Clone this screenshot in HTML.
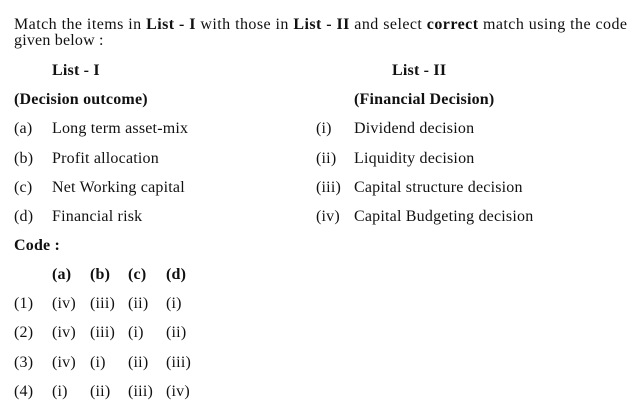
<!DOCTYPE html>
<html><head><meta charset="utf-8"><style>
body{margin:0;width:643px;height:414px;background:#fff;font-family:"Liberation Serif",serif;font-size:16px;letter-spacing:0.2px;color:#111;position:relative;overflow:hidden}
div{position:absolute;line-height:18px;white-space:nowrap}
b{font-weight:bold}
</style></head><body>
<div style="left:14px;top:16px;letter-spacing:0.45px">Match the items in <b>List - I</b> with those in <b>List - II</b> and select <b>correct</b> match using the code</div>
<div style="left:14px;top:32px">given below :</div>
<div style="left:52px;top:62px"><b>List - I</b></div>
<div style="left:392px;top:62px"><b>List - II</b></div>
<div style="left:14px;top:91px"><b>(Decision outcome)</b></div>
<div style="left:354px;top:91px"><b>(Financial Decision)</b></div>

<div style="left:14px;top:120px">(a)</div><div style="left:52px;top:120px">Long term asset-mix</div>
<div style="left:316px;top:120px">(i)</div><div style="left:354px;top:120px">Dividend decision</div>
<div style="left:14px;top:150px">(b)</div><div style="left:52px;top:150px">Profit allocation</div>
<div style="left:316px;top:150px">(ii)</div><div style="left:354px;top:150px">Liquidity decision</div>
<div style="left:14px;top:179px">(c)</div><div style="left:52px;top:179px">Net Working capital</div>
<div style="left:316px;top:179px">(iii)</div><div style="left:354px;top:179px">Capital structure decision</div>
<div style="left:14px;top:208px">(d)</div><div style="left:52px;top:208px">Financial risk</div>
<div style="left:316px;top:208px">(iv)</div><div style="left:354px;top:208px">Capital Budgeting decision</div>

<div style="left:14px;top:237px"><b>Code :</b></div>
<div style="left:52px;top:266px"><b>(a)</b></div><div style="left:90px;top:266px"><b>(b)</b></div><div style="left:128px;top:266px"><b>(c)</b></div><div style="left:166px;top:266px"><b>(d)</b></div>

<div style="left:14px;top:295px">(1)</div><div style="left:52px;top:295px">(iv)</div><div style="left:90px;top:295px">(iii)</div><div style="left:128px;top:295px">(ii)</div><div style="left:166px;top:295px">(i)</div>
<div style="left:14px;top:324px">(2)</div><div style="left:52px;top:324px">(iv)</div><div style="left:90px;top:324px">(iii)</div><div style="left:128px;top:324px">(i)</div><div style="left:166px;top:324px">(ii)</div>
<div style="left:14px;top:354px">(3)</div><div style="left:52px;top:354px">(iv)</div><div style="left:90px;top:354px">(i)</div><div style="left:128px;top:354px">(ii)</div><div style="left:166px;top:354px">(iii)</div>
<div style="left:14px;top:383px">(4)</div><div style="left:52px;top:383px">(i)</div><div style="left:90px;top:383px">(ii)</div><div style="left:128px;top:383px">(iii)</div><div style="left:166px;top:383px">(iv)</div>
</body></html>
